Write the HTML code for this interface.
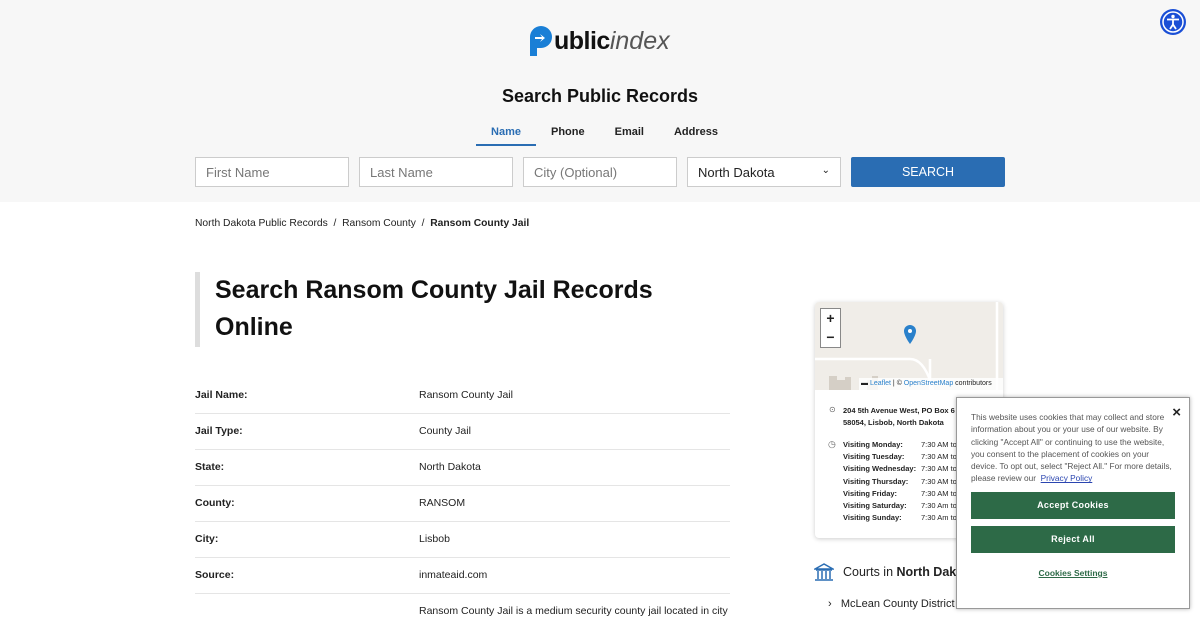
<!DOCTYPE html>
<html><head><meta charset="utf-8"><style>
*{box-sizing:border-box;margin:0;padding:0}
body{width:1200px;height:620px;overflow:hidden;font-family:"Liberation Sans",sans-serif;color:#222;background:#fff;position:relative}
.top{background:#f7f7f7;height:202px;position:relative}
.logo{position:absolute;left:528px;top:24px;height:34px;display:flex;align-items:center}
.logo .b{font-weight:bold;font-size:25px;color:#111;letter-spacing:-0.5px}
.logo .i{font-style:italic;font-size:25px;color:#555}
h2{position:absolute;top:86px;width:100%;text-align:center;font-size:18px;font-weight:bold;color:#111}
.tabs{position:absolute;top:126px;left:476px;display:flex;font-size:11px;font-weight:bold}
.tabs div{padding:0 15px;height:20px}
.tabs .a{color:#2a6db3;border-bottom:2px solid #2a6db3;width:60px;text-align:center}
.inp{position:absolute;top:157px;height:30px;width:154px;border:1px solid #ccc;background:#fff;font-size:13px;color:#777;padding:7px 10px}
.btn{position:absolute;left:851px;top:157px;width:154px;height:30px;background:#2a6db3;color:#fff;font-size:12.5px;text-align:center;line-height:30px;border-radius:2px}
.bc{position:absolute;top:218px;left:195px;font-size:10.3px;color:#222}
.h1{position:absolute;top:272px;left:195px;border-left:5px solid #ddd;padding-left:15px;font-size:25px;font-weight:bold;line-height:37px;color:#111;height:75px}
.row{position:absolute;left:195px;width:535px;height:36px;border-bottom:1px solid #e5e5e5;font-size:10.5px;white-space:nowrap}
.row b{position:absolute;left:0;top:11px}
.row span{position:absolute;left:224px;top:11px}
.map{position:absolute;left:815px;top:302px;width:188px;height:236px;background:#fff;box-shadow:0 1px 5px rgba(0,0,0,.2);border-radius:4px;overflow:hidden}
.ck{position:absolute;left:956px;top:397px;width:234px;height:212px;background:#fff;border:1px solid #999;box-shadow:0 0 4px rgba(0,0,0,.3)}
.gb{position:absolute;left:14px;width:204px;height:27px;background:#2d6a47;color:#fff;font-size:9px;font-weight:bold;text-align:center;line-height:27px;letter-spacing:.3px}
.sm{font-size:7.5px;color:#222;line-height:12px}
</style></head><body>
<div class="top">
 <div class="logo"><svg width="26" height="34" viewBox="0 0 26 34"><path d="M13 2a11 11 0 1 1 0 22h-4v8H2V13A11 11 0 0 1 13 2z" fill="#1a7fd6"/><path d="M7 13h7l-2-3 5 4-5 4 2-3H7z" fill="#fff"/></svg><span class="b">ublic</span><span class="i">index</span></div>
 <svg style="position:absolute;left:1159px;top:8px" width="28" height="28"><circle cx="14" cy="14" r="13" fill="#1a4fd6"/><circle cx="14" cy="14" r="10" fill="none" stroke="#fff" stroke-width="1.5"/><circle cx="14" cy="8.5" r="1.7" fill="#fff"/><path d="M8 11.5h12M14 11.5v5M14 16.5l-3 4.5M14 16.5l3 4.5" stroke="#fff" stroke-width="1.8" fill="none"/></svg>
 <h2>Search Public Records</h2>
 <div class="tabs"><div class="a">Name</div><div>Phone</div><div>Email</div><div>Address</div></div>
 <div class="inp" style="left:195px">First Name</div>
 <div class="inp" style="left:359px">Last Name</div>
 <div class="inp" style="left:523px">City (Optional)</div>
 <div class="inp" style="left:687px;color:#222">North Dakota<span style="position:absolute;right:10px;font-size:10px">⌄</span></div>
 <div class="btn">SEARCH</div>
</div>
<div class="bc">North Dakota Public Records&nbsp; / &nbsp;Ransom County&nbsp; / &nbsp;<b>Ransom County Jail</b></div>
<div class="h1">Search Ransom County Jail Records<br>Online</div>
<div class="row" style="top:378px"><b>Jail Name:</b><span>Ransom County Jail</span></div>
<div class="row" style="top:414px"><b>Jail Type:</b><span>County Jail</span></div>
<div class="row" style="top:450px"><b>State:</b><span>North Dakota</span></div>
<div class="row" style="top:486px"><b>County:</b><span>RANSOM</span></div>
<div class="row" style="top:522px"><b>City:</b><span>Lisbob</span></div>
<div class="row" style="top:558px"><b>Source:</b><span>inmateaid.com</span></div>
<div class="row" style="top:594px;border:none"><span>Ransom County Jail is a medium security county jail located in city</span></div>
<div class="map">
 <div style="height:88px;background:#f0ede8;position:relative">
  <div style="position:absolute;left:5px;top:6px;width:21px;height:40px;border:1px solid #888;background:#fff;font-size:14px;font-weight:bold;text-align:center;line-height:19px">+<br>−</div>
  <svg style="position:absolute;left:88px;top:22px" width="18" height="26"><path d="M7 1a6 6 0 0 1 6 6c0 5-6 13-6 13S1 12 1 7a6 6 0 0 1 6-6z" fill="#2a81cb"/><circle cx="7" cy="7" r="2" fill="#fff"/></svg>
  <svg style="position:absolute;left:0;top:0" width="188" height="88"><path d="M0 57 H95 Q110 57 118 88 M115 57 V88 M182 0 V88" stroke="#fff" stroke-width="2.5" fill="none"/><path d="M14 88V74h8v4h8v-3h6v13zM52 88V78h5v-4h6v14z" fill="#d5cfc6"/></svg>
  <div style="position:absolute;left:44px;top:76px;right:0;height:12px;background:rgba(255,255,255,.8);font-size:7px;line-height:12px;padding-left:2px">▬ <span style="color:#2a81cb">Leaflet</span> | © <span style="color:#2a81cb">OpenStreetMap</span> contributors</div>
 </div>
 <div style="position:absolute;left:14px;top:103px;font-size:8px;color:#666">⊙</div>
 <div style="position:absolute;left:13px;top:137px;font-size:9px;color:#666">◷</div>
 <div class="sm" style="position:absolute;left:28px;top:103px;font-weight:bold">204 5th Avenue West, PO Box 6<br>58054, Lisbob, North Dakota</div>
 <div class="sm" style="position:absolute;left:28px;top:137px;font-weight:bold;line-height:12.2px">Visiting Monday:<br>Visiting Tuesday:<br>Visiting Wednesday:<br>Visiting Thursday:<br>Visiting Friday:<br>Visiting Saturday:<br>Visiting Sunday:</div>
 <div class="sm" style="position:absolute;left:106px;top:137px;line-height:12.2px">7:30 AM to<br>7:30 AM to<br>7:30 AM to<br>7:30 AM to<br>7:30 AM to<br>7:30 Am to<br>7:30 Am to</div>
</div>
<svg style="position:absolute;left:814px;top:563px" width="20" height="19"><path d="M10 1 1 6h18zM2 7h16M4 8v8M8 8v8M12 8v8M16 8v8M1 17h18" stroke="#2a6db3" stroke-width="1.5" fill="none"/></svg>
<div style="position:absolute;left:843px;top:565px;font-size:12.5px">Courts in <b>North Dakota</b></div>
<div style="position:absolute;left:828px;top:598px;font-size:11px">›&nbsp;&nbsp; McLean County District Court</div>
<div class="ck">
 <div style="position:absolute;right:8px;top:6px;font-size:15px;font-weight:bold">×</div>
 <div style="position:absolute;left:14px;top:13px;width:205px;font-size:8.3px;color:#555;line-height:12.3px">This website uses cookies that may collect and store information about you or your use of our website. By clicking "Accept All" or continuing to use the website, you consent to the placement of cookies on your device. To opt out, select "Reject All." For more details, please review our &nbsp;<u style="color:#2a45b0">Privacy Policy</u></div>
 <div class="gb" style="top:94px">Accept Cookies</div>
 <div class="gb" style="top:128px">Reject All</div>
 <div style="position:absolute;left:0;width:100%;top:170px;text-align:center;font-size:8.5px;font-weight:bold;color:#2d6a47;text-decoration:underline">Cookies Settings</div>
</div>
</body></html>
